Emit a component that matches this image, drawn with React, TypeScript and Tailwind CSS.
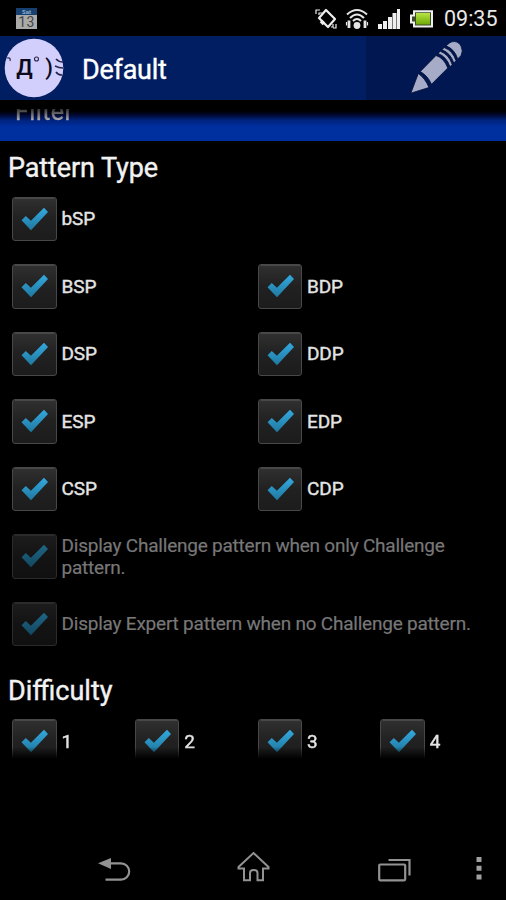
import React from "react";

type CheckProps = { label: string; disabled?: boolean; clipped?: boolean };

function CheckBox({ disabled = false }: { disabled?: boolean }) {
  return (
    <span
      className={`block h-[44.5px] w-[44.5px] shrink-0 rounded-[3px] border border-[#484848] bg-linear-to-b from-[#303030] via-[#212121] to-[#1c1c1c] ${
        disabled ? "opacity-60" : ""
      }`}
    >
      <svg width="43" height="43" viewBox="0 0 43 43" className="block">
        <defs>
          <linearGradient id="tick" x1="0" y1="0" x2="0" y2="1">
            <stop offset="0" stopColor="#34a9df" />
            <stop offset="1" stopColor="#1f789f" />
          </linearGradient>
        </defs>
        <path d="M2 0.5H41" stroke="#595959" strokeWidth="1" opacity="0.6" />
        <path d="M8.5 22.3L12.8 18L17.9 22.8L31 9.8L35 14L18 32.3Z" fill="url(#tick)" />
      </svg>
    </span>
  );
}

function Check({ label, disabled, clipped }: CheckProps) {
  return (
    <label className={`flex pl-[4px] ${clipped ? "items-start" : "h-[67.5px] items-center"}`}>
      <CheckBox disabled={disabled} />
      <span
        className={`ml-[5px] text-[19px] leading-[22.5px] ${clipped ? "mt-[12px]" : "pt-[1.5px]"} ${
          disabled
            ? "tracking-[-0.22px] text-[#777777] [-webkit-text-stroke:0.2px_#777777]"
            : "tracking-[-0.1px] text-[#e4e4e4] [-webkit-text-stroke:0.4px_#e4e4e4]"
        }`}
      >
        {label}
      </span>
    </label>
  );
}

function StatusBar() {
  return (
    <div className="flex h-[36px] shrink-0 items-center bg-black pt-px">
      <div className="ml-[16px] flex h-[21px] w-[21px] flex-col bg-[#aaa] text-center">
        <span className="h-[7px] bg-[#173f70] text-[6px] font-bold leading-[7px] text-[#8fb0cf]">Sat</span>
        <span className="h-[14px] text-[14px] leading-[14px] tracking-[0.5px] text-[#444]">13</span>
      </div>
      <svg className="ml-auto" width="23" height="24" viewBox="0 0 23 24" fill="none" stroke="#eee">
        <path d="M11 3L20 12L13 20L4 11Z" strokeWidth="2.2" strokeLinejoin="round" />
        <path d="M6 14L9 17" strokeWidth="3.6" />
        <path d="M1 7V3H5M4 8V6H7M16 20H18V17M18 21H21V17" strokeWidth="1.2" />
      </svg>
      <svg className="ml-[7px]" width="24" height="24" viewBox="0 0 24 24" fill="none" stroke="#e5e5e5">
        <path d="M2 7.5Q12 -1.5 22 7.5M5 11Q12 4 19 11M8 14Q12 10 16 14" strokeWidth="2" />
        <circle cx="12" cy="18.5" r="3.4" fill="#e5e5e5" stroke="none" />
        <path d="M4 13.5V21M20 13.5V21" strokeWidth="2.8" />
        <path d="M1.5 15V18.5M22.5 15V18.5" strokeWidth="1.2" />
      </svg>
      <svg className="ml-[8px]" width="24" height="24" viewBox="0 0 24 24" fill="#eee">
        <path d="M1 17h4v5H1zM6 14h4v8H6zM11 10h4v12h-4zM15.5 6h4v16h-4zM20 2h3v20h-3z" />
      </svg>
      <svg className="ml-[8px]" width="25" height="20" viewBox="0 0 25 20">
        <defs>
          <linearGradient id="charge" x1="0" y1="0" x2="0" y2="1">
            <stop offset="0" stopColor="#b7e444" />
            <stop offset="1" stopColor="#6eaa08" />
          </linearGradient>
        </defs>
        <path d="M5 2.2H23V17.5H5V13.5H2V6.5H5Z" fill="#3c4a28" stroke="#eee" strokeWidth="2" />
        <path d="M7 4H21V15.5H7Z" fill="url(#charge)" />
      </svg>
      <span className="ml-[10px] mr-[7px] w-[55px] whitespace-nowrap text-[21.5px] leading-[24px] text-[#e8e8e8]">
        09:35
      </span>
    </div>
  );
}

function TitleBar() {
  return (
    <header className="flex h-[64px] shrink-0 bg-[#001e61]">
      <div className="flex flex-1 items-center">
        <svg className="ml-[4px]" width="61" height="62" viewBox="0 0 61 62">
          <circle cx="30" cy="31" r="29.3" fill="#d2cffc" />
          <g fill="none" stroke="#28264b" strokeWidth="1.6">
            <circle cx="32.5" cy="22" r="2" strokeWidth="1.1" />
            <path d="M3 21Q7 20 6 24" strokeWidth="1.2" />
            <path d="M52 22Q55 25 59 25M51 29Q55 31 59 31M52 35Q54 38 58 38" />
          </g>
          <text x="12.3" y="38.3" fill="#0c0a1c" fontSize="22" fontWeight="600" fontFamily="Roboto, sans-serif">Д</text>
          <text x="41.2" y="37.5" fill="#0c0a1c" fontSize="22" fontWeight="500" fontFamily="Roboto, sans-serif">)</text>
        </svg>
        <h1 className="ml-[17px] mt-[4px] text-[27px] font-normal leading-[32px] tracking-[-0.25px] text-white [-webkit-text-stroke:0.4px_white]">Default</h1>
      </div>
      <button className="flex w-[140px] items-start justify-center bg-[#001751]" aria-label="Edit">
        <svg width="56" height="60" viewBox="0 0 56 60" fill="#a6abc8" stroke="#000b31" strokeWidth="0.8" strokeLinejoin="round">
          <path d="M2.8 57.2L10.3 37.5Q17 42 21 51.5Z" />
          <path d="M12.3 35.5L28 19.5Q36 22 39.8 32L23.5 48.3Q20 40 12.3 35.5Z" />
          <path d="M30 17.5Q38.5 20.5 42 30.8L44.2 28.5Q41 18.5 32.3 15.3Z" />
          <path d="M34 13.7Q42.5 17 45.8 27L48 24.7Q44.8 14.8 36.2 11.5Z" />
          <path d="M38 9.8L41.5 7C46 4 51 6 53 10Q55.5 15 53 19.5L49.8 23Q46.5 13 38 9.8Z" />
        </svg>
      </button>
    </header>
  );
}

function NavigationBar() {
  return (
    <nav className="flex h-[60px] shrink-0 items-start bg-black">
      <svg className="ml-[98px] mt-[15px]" width="34" height="28" viewBox="0 0 34 28">
        <path d="M10 8.3H23A8 8 0 0 1 23 24.7H7.5" fill="none" stroke="#929292" strokeWidth="2.2" />
        <path d="M0 8.3L13 3V14Z" fill="#929292" />
      </svg>
      <svg className="ml-[105px] mt-[10px]" width="34" height="32" viewBox="0 0 34 32" fill="none" stroke="#929292" strokeWidth="2">
        <path d="M16.5 3L31.5 17V18.5H26V30.2H20.5V23Q20.5 20 16.5 20Q13 20 13 23V30.2H7V18.5H1.5V17Z" />
      </svg>
      <svg className="ml-[106px] mt-[15px]" width="36" height="28" viewBox="0 0 36 28" fill="none" stroke="#929292" strokeWidth="2.2">
        <rect x="2.2" y="9.5" width="26" height="15.8" rx="1" />
        <path d="M11.5 5H32.5V20.5" />
      </svg>
      <svg className="ml-[60px] mt-[15px]" width="12" height="28" viewBox="0 0 12 28" fill="#a0a0a0">
        <path d="M3.5 2h5v5h-5zM3.5 10.8h5v5h-5zM3.5 19.5h5v5h-5z" />
      </svg>
    </nav>
  );
}

export default function App() {
  return (
    <div className="flex h-[900px] w-[506px] flex-col overflow-hidden bg-black font-[Roboto,'Noto_Sans',sans-serif]">
      <StatusBar />
      <TitleBar />
      <main className="flex min-h-0 flex-1 flex-col">
        <div className="mt-[9px] h-[32px] shrink-0 overflow-hidden bg-linear-to-b from-black via-[#00237d] via-35% to-[#002f9f] to-55%">
          <p className="-mt-[13.5px] ml-[15px] bg-linear-to-b from-[#333] from-40% to-[#b0b0b8] to-75% bg-clip-text text-[25px] leading-[32px] tracking-[0.4px] text-transparent [-webkit-text-stroke:0.4px_transparent]">
            Filter
          </p>
        </div>
        <section className="pl-[8px] pr-[7px]">
          <h2 className="flex h-[44px] items-center pt-[9px] text-[27px] font-normal leading-[32px] tracking-[-0.1px] text-[#f2f2f2] [-webkit-text-stroke:0.4px_#f2f2f2]">Pattern Type</h2>
          <div className="grid grid-cols-2">
            <div className="col-span-2"><Check label="bSP" /></div>
            {["BSP", "BDP", "DSP", "DDP", "ESP", "EDP", "CSP", "CDP"].map((name) => (
              <Check key={name} label={name} />
            ))}
            <div className="col-span-2"><Check label="Display Challenge pattern when only Challenge pattern." disabled /></div>
            <div className="col-span-2"><Check label="Display Expert pattern when no Challenge pattern." disabled /></div>
          </div>
        </section>
        <section className="pl-[8px] pr-[7px]">
          <h2 className="flex h-[61.5px] items-center pt-[5px] text-[27px] font-normal leading-[32px] text-[#f2f2f2] [-webkit-text-stroke:0.4px_#f2f2f2]">Difficulty</h2>
          <div className="grid h-[40px] grid-cols-4 overflow-hidden">
            {["1", "2", "3", "4"].map((level) => (
              <div key={level} className="h-[40px] overflow-hidden mask-[linear-gradient(to_bottom,black_28px,transparent_40px)]">
                <Check label={level} clipped />
              </div>
            ))}
          </div>
        </section>
      </main>
      <NavigationBar />
    </div>
  );
}
